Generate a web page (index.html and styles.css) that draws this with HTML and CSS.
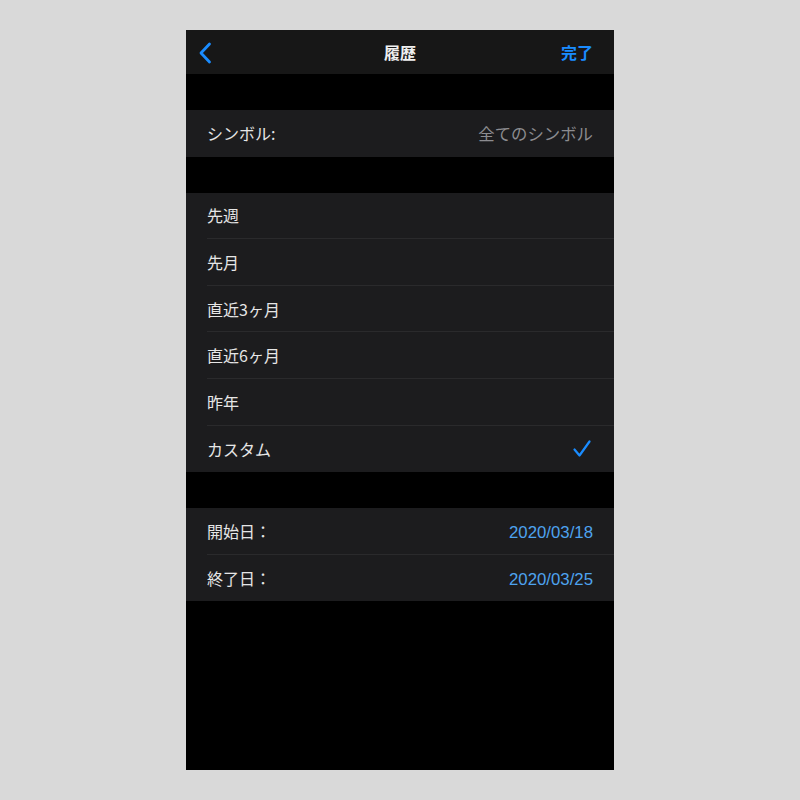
FILE: index.html
```html
<!DOCTYPE html>
<html lang="ja">
<head>
    <meta charset="UTF-8">
    <meta name="viewport" content="width=device-width, initial-scale=1.0">
    <title>履歴</title>
    <link rel="stylesheet" href="styles.css">
</head>
<body>
    <div class="phone">
        <!-- Navigation bar -->
        <div class="navbar">
            <button class="nav-back" aria-label="戻る">
                <svg width="14" height="22" viewBox="0 0 14 22">
                    <path d="M11.5 2 L3 11 L11.5 20" fill="none" stroke="#1a8cff" stroke-width="2.8" stroke-linecap="round" stroke-linejoin="round"/>
                </svg>
            </button>
            <div class="nav-title">履歴</div>
            <button class="nav-done">完了</button>
        </div>

        <!-- Symbol filter -->
        <div class="group">
            <div class="row">
                <span>シンボル:</span>
                <span class="value-muted">全てのシンボル</span>
            </div>
        </div>

        <!-- Period options -->
        <ul class="group" id="periodList"></ul>

        <!-- Custom range -->
        <div class="group">
            <div class="row">
                <span>開始日：</span>
                <span class="value-date">2020/03/18</span>
            </div>
            <div class="row">
                <span>終了日：</span>
                <span class="value-date">2020/03/25</span>
            </div>
        </div>
    </div>

    <script>
        const periods = ['先週', '先月', '直近3ヶ月', '直近6ヶ月', '昨年', 'カスタム'];
        let selected = 'カスタム';

        const checkIcon = `
            <svg width="18" height="18" viewBox="0 0 18 18">
                <path d="M1.5 9.5 L6.5 15.5 L16.5 1.5" fill="none" stroke="#1a8cff" stroke-width="2.2" stroke-linecap="round" stroke-linejoin="round"/>
            </svg>`;

        function renderPeriods() {
            const list = document.getElementById('periodList');
            list.innerHTML = '';
            periods.forEach(label => {
                const li = document.createElement('li');
                li.className = 'row';
                li.innerHTML = `<span>${label}</span>${label === selected ? checkIcon : ''}`;
                li.addEventListener('click', () => {
                    selected = label;
                    renderPeriods();
                });
                list.appendChild(li);
            });
        }

        renderPeriods();
    </script>
</body>
</html>
```

FILE: styles.css
```css
body {
    margin: 0;
    background-color: #d9d9d9;
    font-family: "Noto Sans CJK JP", "Noto Sans", sans-serif;
    display: flex;
    justify-content: center;
    padding-top: 30px;
}
.phone {
    width: 428px;
    height: 740px;
    background-color: #000;
    color: #e6e6e6;
    overflow: hidden;
}
.navbar {
    height: 44px;
    background-color: #171717;
    display: flex;
    align-items: center;
    justify-content: space-between;
    padding: 0 21px 0 12px;
    margin-bottom: 36px;
    position: relative;
}
.nav-back, .nav-done {
    background: none;
    border: none;
    padding: 0;
    cursor: pointer;
    font-family: inherit;
}
.nav-back {
    display: flex;
    padding-top: 2px;
}
.nav-title {
    position: absolute;
    left: 0;
    right: 0;
    text-align: center;
    font-size: 16px;
    font-weight: bold;
    color: #f0f0f0;
    pointer-events: none;
}
.nav-done {
    font-size: 16px;
    font-weight: bold;
    color: #1a8cff;
}
.group {
    list-style: none;
    margin: 0 0 36px;
    padding: 0 0 0 21px;
    background-color: #1c1c1e;
}
.row {
    height: 46.6px;
    box-sizing: border-box;
    display: flex;
    align-items: center;
    justify-content: space-between;
    padding-right: 21px;
    font-size: 16px;
    border-bottom: 1px solid #2a2a2c;
    cursor: pointer;
}
.row:last-child {
    border-bottom: none;
}
.row svg {
    margin-right: 2px;
}
.value-muted {
    color: #8c8c90;
    font-size: 16.4px;
}
.value-date {
    color: #4ea3ef;
    font-family: "Liberation Sans", Arial, sans-serif;
    font-size: 16.8px;
    padding-top: 4px;
}
```
